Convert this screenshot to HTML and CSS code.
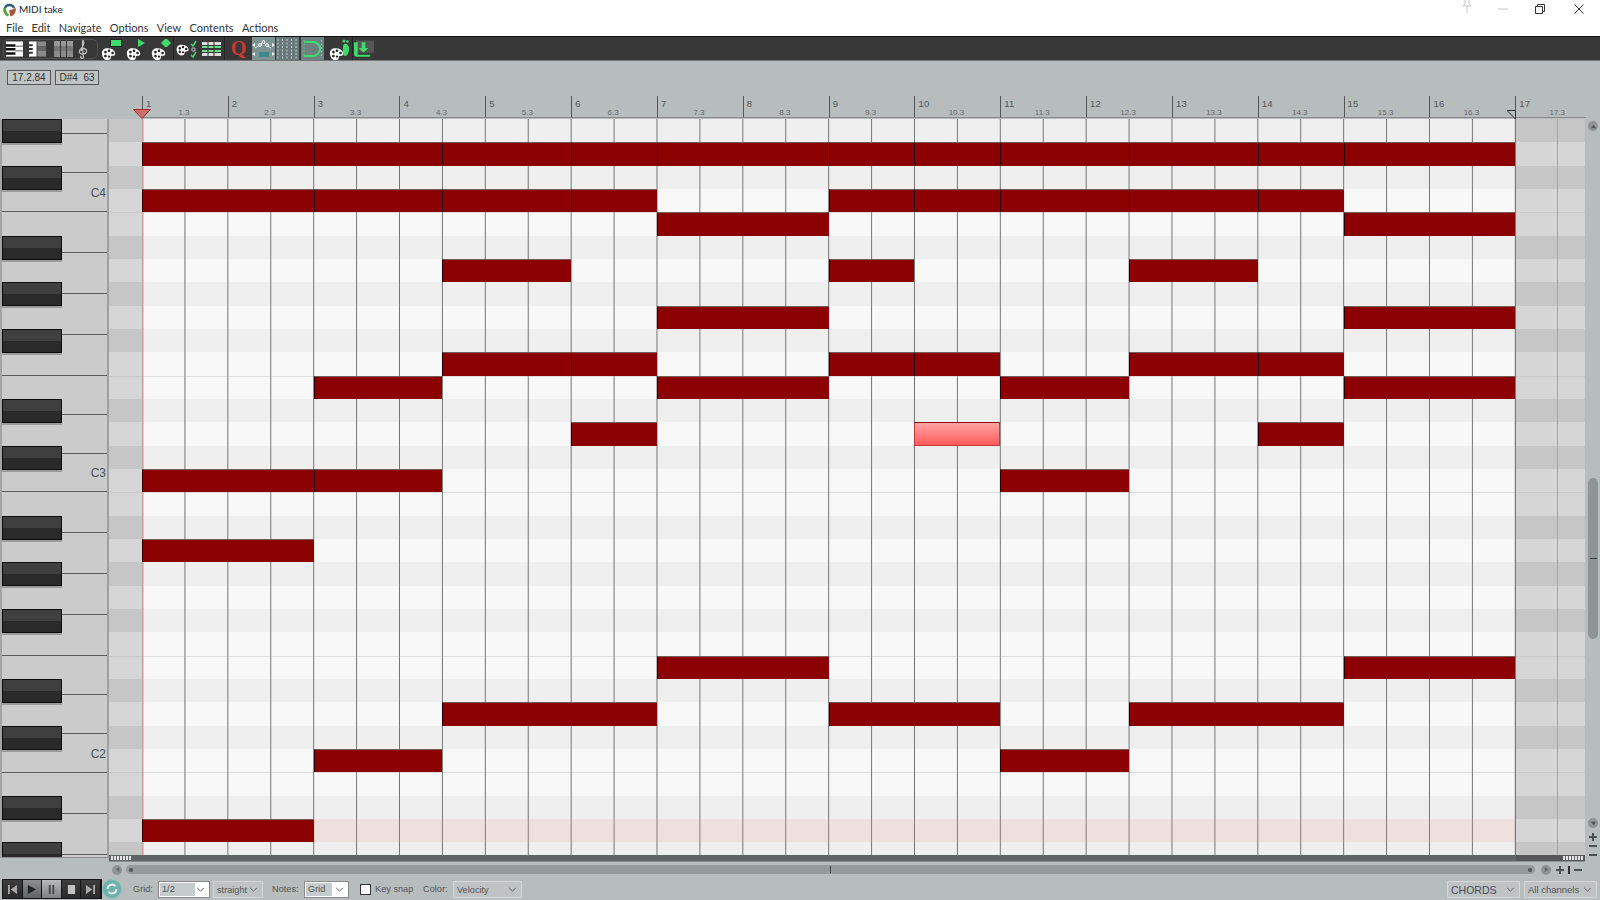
FILE: index.html
```html
<!DOCTYPE html>
<html>
<head>
  <meta charset="UTF-8">
  <title>MIDI take</title>
  <link rel="stylesheet" href="styles.css">
</head>
<body>
  <svg class="defs" width="0" height="0">
    <symbol id="palette" viewBox="0 0 20 18">
      <path d="M2 9c0-4 4-6 8-5 4 0 7 3 7 6 0 2-2 2-3 2-2 0-2 1-2 2 0 2-1 3-4 3-4 0-6-4-6-8z" fill="#fff"/>
      <circle cx="6" cy="8" r="1.5" fill="#222"/><circle cx="10" cy="6.5" r="1.5" fill="#222"/>
      <circle cx="14" cy="9" r="1.5" fill="#222"/><circle cx="6" cy="12.5" r="1.5" fill="#222"/>
      <circle cx="10" cy="13" r="1.3" fill="#222"/>
    </symbol>
    <symbol id="chev" viewBox="0 0 10 6">
      <path d="M1 1l4 4 4-4" fill="none" stroke="#555" stroke-width="1.1"/>
    </symbol>
  </svg>

  <header class="titlebar">
    <svg class="logo" viewBox="0 0 16 16">
      <path d="M2 6a6.5 6.5 0 0 1 12 0l-2 1a4.500 4.500 0 0 0-8 0z" fill="#2d5d78"/>
      <path d="M1.500 6c-1 4 1 8 5 9.500l1-2C5 12 4 9 4.500 7z" fill="#5aa03c"/>
      <path d="M14.500 6c1 4-1 8-5.500 9.500L7.500 9c2-1 4.500-1 7-3z" fill="#a5583c"/>
    </svg>
    <span class="title">MIDI take</span>
    <div class="winbtns">
      <svg class="pin" viewBox="0 0 14 14"><path d="M4 0h6M5 0v5L3 7h8L9 5V0M7 7v7" fill="none" stroke="#c8c8c8"/></svg>
      <svg class="min" viewBox="0 0 10 10"><path d="M0 5h10" stroke="#c4c4c4"/></svg>
      <svg class="max" viewBox="0 0 10 10"><path d="M.5 2.500h7v7h-7zM2.500 2.500v-2h7v7h-2" fill="none" stroke="#333"/></svg>
      <svg class="close" viewBox="0 0 10 10"><path d="M.5.500l9 9M9.500.500l-9 9" stroke="#333"/></svg>
    </div>
  </header>

  <nav class="menubar">
    <span>File</span><span>Edit</span><span>Navigate</span><span>Options</span><span>View</span><span>Contents</span><span>Actions</span>
  </nav>

  <div class="toolbar">
    <div class="tool-group">
      <svg class="ic ic-keys" viewBox="0 0 18 16">
        <rect width="18" height="16" fill="#fff"/>
        <path d="M0 3h10v2.500H0zM0 7h10v2.500H0zM0 11.500h10V14H0z" fill="#111"/>
        <path d="M10 5h8M10 10h8" stroke="#555"/>
      </svg>
      <svg class="ic ic-keys" viewBox="0 0 18 16">
        <rect width="8" height="16" fill="#fff"/>
        <path d="M0 3h4v2H0zM0 7h4v2H0zM0 11h4v2H0z" fill="#333"/>
        <path d="M9 0h9v5H9z" fill="#8a8a8a"/><path d="M9 5h9v5H9z" fill="#666"/><path d="M9 10h9v6H9z" fill="#8a8a8a"/>
      </svg>
      <svg class="ic ic-grid" viewBox="0 0 19 16">
        <path d="M0 0h19v5H0z" fill="#999"/><path d="M0 5h19v5H0z" fill="#777"/><path d="M0 10h19v6H0z" fill="#8a8a8a"/>
        <path d="M6.500 0v16M12.500 0v16" stroke="#383838"/>
      </svg>
      <svg class="ic ic-clef" viewBox="0 0 10 20">
        <path d="M5.500 19c-2 1-3.500-.5-2.500-2M5 1c1.500 3 1 5-1 7.500C2 10.500 1 12 1.500 13.500c1 2.500 6 2.500 7-.5.500-2-1-3.500-3-3.500-1.500 0-2.500 1-2 2.500M5 1c-1 2-1 4 .5 18" fill="none" stroke="#bbb" stroke-width="1.300"/>
      </svg>
    </div>
    <span class="pal">
      <svg class="ic-pal" viewBox="0 0 20 18"><use href="#palette"/></svg>
      <svg class="pal-mark" viewBox="0 0 12 8"><rect x=".5" y=".5" width="11" height="7" fill="#3ddc6a" stroke="#222"/></svg>
    </span>
    <span class="pal">
      <svg class="ic-pal" viewBox="0 0 20 18"><use href="#palette"/></svg>
      <svg class="pal-mark" viewBox="0 0 12 8"><path d="M3 0l7 4-7 4z" fill="#3ddc6a"/></svg>
    </span>
    <span class="pal">
      <svg class="ic-pal" viewBox="0 0 20 18"><use href="#palette"/></svg>
      <svg class="pal-mark" viewBox="0 0 12 8"><path d="M6-1l5 5-5 5-5-5z" fill="#3ddc6a"/></svg>
    </span>
    <span class="btn btn-a">
      <svg class="ic-checks" viewBox="0 0 23 20">
        <use href="#palette" width="16" height="18" y="1"/>
        <path d="M16 5l2 2 3-5M16 16l2 2 3-5" fill="none" stroke="#3ddc6a" stroke-width="1.500"/>
        <path d="M17 9h3v3h-3z" fill="none" stroke="#bbb"/>
      </svg>
    </span>
    <span class="btn btn-b">
      <svg class="ic-table" viewBox="0 0 19 16">
        <path d="M0 1h19v3H0zM0 12h19v3H0z" fill="#ddd"/>
        <path d="M0 5h19v2H0zM0 9h19v2H0z" fill="#6fdc8c"/>
        <path d="M6 0v16M12 0v16" stroke="#333"/>
      </svg>
    </span>
    <span class="btn btn-q">Q</span>
    <span class="btn btn-env">
      <svg class="ic-env" viewBox="0 0 23 20">
        <path d="M3 9l5-3 3-3 3 3 5 3" fill="none" stroke="#dfe5e5"/>
        <circle cx="8" cy="6" r="1.400" fill="#7d9292" stroke="#fff"/><circle cx="11.500" cy="3" r="1.400" fill="#7d9292" stroke="#fff"/><circle cx="15" cy="6" r="1.400" fill="#7d9292" stroke="#fff"/>
        <path d="M7 13h10v5H7z" fill="#3d8a8e"/>
        <path d="M0 6l3-2v4zM23 6l-3-2v4zM0 15l3-2v4zM23 15l-3-2v4z" fill="#eee"/>
      </svg>
    </span>
    <span class="btn btn-dots">
      <svg class="ic-env" viewBox="0 0 23 20">
        <path d="M2 0v20M6.500 0v20M11 0v20M15.500 0v20M20 0v20" stroke="#c3cbcb" stroke-dasharray="2 1.500"/>
      </svg>
    </span>
    <span class="btn btn-loop">
      <svg class="ic-env" viewBox="0 0 23 20">
        <path d="M3 3h9a7 7 0 0 1 0 14H3" fill="none" stroke="#3ddc6a" stroke-width="2"/>
        <path d="M3 1v18" stroke="#3ddc6a" stroke-dasharray="2 1.500"/>
        <path d="M20.500 1v18" stroke="#aab5b5" stroke-dasharray="2 1.500"/>
      </svg>
    </span>
    <span class="pal pal-foot">
      <svg class="ic-pal" viewBox="0 0 20 18"><use href="#palette"/></svg>
      <svg class="foot-mark" viewBox="0 0 9 18"><path d="M3 5c3-1 5 1 5 5s-2 7-4 7-2-3-2-6 0-5 1-6z" fill="#3ddc6a"/><circle cx="3" cy="2" r="1.500" fill="#3ddc6a"/><circle cx="6.500" cy="2.500" r="1.300" fill="#3ddc6a"/></svg>
    </span>
    <span class="btn btn-down">
      <svg class="ic-env" viewBox="0 0 23 20">
        <path d="M3 1h19v13H5" fill="#555"/>
        <path d="M1 3v12c0 2 1 3 3 3h14v-2H5V3z" fill="#3ddc6a"/>
        <path d="M9 3v6H6l5 5 5-5h-3V3z" fill="#3ddc6a"/>
      </svg>
    </span>
  </div>

  <div class="infobar">
    <span class="info info-pos">17.2.84</span>
    <span class="info info-note">D#4&nbsp; 63</span>
  </div>

  <div class="ruler">
    <div class="bar"><b>1</b><i>1.3</i></div>
    <div class="bar"><b>2</b><i>2.3</i></div>
    <div class="bar"><b>3</b><i>3.3</i></div>
    <div class="bar"><b>4</b><i>4.3</i></div>
    <div class="bar"><b>5</b><i>5.3</i></div>
    <div class="bar"><b>6</b><i>6.3</i></div>
    <div class="bar"><b>7</b><i>7.3</i></div>
    <div class="bar"><b>8</b><i>8.3</i></div>
    <div class="bar"><b>9</b><i>9.3</i></div>
    <div class="bar"><b>10</b><i>10.3</i></div>
    <div class="bar"><b>11</b><i>11.3</i></div>
    <div class="bar"><b>12</b><i>12.3</i></div>
    <div class="bar"><b>13</b><i>13.3</i></div>
    <div class="bar"><b>14</b><i>14.3</i></div>
    <div class="bar"><b>15</b><i>15.3</i></div>
    <div class="bar"><b>16</b><i>16.3</i></div>
    <div class="bar"><b>17</b><i>17.3</i></div>
    <svg class="loop-start" viewBox="0 0 18 10"><path d="M.5.500h17L9 9.500z" fill="#c9706e" stroke="#a02828"/></svg>
    <svg class="loop-end" viewBox="0 0 9 9"><path d="M0 .5h8.500V9z" fill="#b7bdbd" stroke="#333"/></svg>
  </div>

  <div class="editor">
    <div class="keyboard">
      <div class="wkey top"></div>
      <div class="wkey low"></div>
      <div class="wkey low">C4</div>
      <div class="wkey"></div><div class="wkey"></div><div class="wkey"></div><div class="wkey"></div>
      <div class="wkey low"></div><div class="wkey low"></div><div class="wkey low">C3</div>
      <div class="wkey"></div><div class="wkey"></div><div class="wkey"></div><div class="wkey"></div>
      <div class="wkey low"></div><div class="wkey low"></div><div class="wkey low">C2</div>
      <div class="wkey"></div><div class="wkey"></div>
      <div class="blacks">
        <div class="bkey" style="grid-row:1"></div>
        <div class="bkey" style="grid-row:3"></div>
        <div class="bkey" style="grid-row:6"></div>
        <div class="bkey" style="grid-row:8"></div>
        <div class="bkey" style="grid-row:10"></div>
        <div class="bkey" style="grid-row:13"></div>
        <div class="bkey" style="grid-row:15"></div>
        <div class="bkey" style="grid-row:18"></div>
        <div class="bkey" style="grid-row:20"></div>
        <div class="bkey" style="grid-row:22"></div>
        <div class="bkey" style="grid-row:25"></div>
        <div class="bkey" style="grid-row:27"></div>
        <div class="bkey" style="grid-row:30"></div>
        <div class="bkey" style="grid-row:32"></div>
      </div>
    </div>

    <div class="center">
      <div class="roll">
        <div class="gutter rows"></div>
        <div class="notes rows">
          <div class="note" style="grid-area:2/1/3/5"></div>
          <div class="note" style="grid-area:2/5/3/8"></div>
          <div class="note" style="grid-area:2/8/3/11"></div>
          <div class="note" style="grid-area:2/11/3/13"></div>
          <div class="note" style="grid-area:2/13/3/17"></div>
          <div class="note" style="grid-area:2/17/3/19"></div>
          <div class="note" style="grid-area:2/19/3/21"></div>
          <div class="note" style="grid-area:2/21/3/24"></div>
          <div class="note" style="grid-area:2/24/3/27"></div>
          <div class="note" style="grid-area:2/27/3/29"></div>
          <div class="note" style="grid-area:2/29/3/33"></div>

          <div class="note" style="grid-area:4/1/5/5"></div>
          <div class="note" style="grid-area:4/5/5/8"></div>
          <div class="note" style="grid-area:4/8/5/11"></div>
          <div class="note" style="grid-area:4/11/5/13"></div>
          <div class="note" style="grid-area:4/17/5/19"></div>
          <div class="note" style="grid-area:4/19/5/21"></div>
          <div class="note" style="grid-area:4/21/5/24"></div>
          <div class="note" style="grid-area:4/24/5/27"></div>
          <div class="note" style="grid-area:4/27/5/29"></div>

          <div class="note" style="grid-area:5/13/6/17"></div>
          <div class="note" style="grid-area:5/29/6/33"></div>

          <div class="note" style="grid-area:7/8/8/11"></div>
          <div class="note" style="grid-area:7/17/8/19"></div>
          <div class="note" style="grid-area:7/24/8/27"></div>

          <div class="note" style="grid-area:9/13/10/17"></div>
          <div class="note" style="grid-area:9/29/10/33"></div>

          <div class="note" style="grid-area:11/8/12/11"></div>
          <div class="note" style="grid-area:11/11/12/13"></div>
          <div class="note" style="grid-area:11/17/12/19"></div>
          <div class="note" style="grid-area:11/19/12/21"></div>
          <div class="note" style="grid-area:11/24/12/27"></div>
          <div class="note" style="grid-area:11/27/12/29"></div>

          <div class="note" style="grid-area:12/5/13/8"></div>
          <div class="note" style="grid-area:12/13/13/17"></div>
          <div class="note" style="grid-area:12/21/13/24"></div>
          <div class="note" style="grid-area:12/29/13/33"></div>

          <div class="note" style="grid-area:14/11/15/13"></div>
          <div class="note selected" style="grid-area:14/19/15/21"></div>
          <div class="note" style="grid-area:14/27/15/29"></div>

          <div class="note" style="grid-area:16/1/17/5"></div>
          <div class="note" style="grid-area:16/5/17/8"></div>
          <div class="note" style="grid-area:16/21/17/24"></div>

          <div class="note" style="grid-area:19/1/20/5"></div>

          <div class="note" style="grid-area:24/13/25/17"></div>
          <div class="note" style="grid-area:24/29/25/33"></div>

          <div class="note" style="grid-area:26/8/27/13"></div>
          <div class="note" style="grid-area:26/17/27/21"></div>
          <div class="note" style="grid-area:26/24/27/29"></div>

          <div class="note" style="grid-area:28/5/29/8"></div>
          <div class="note" style="grid-area:28/21/29/24"></div>

          <div class="note" style="grid-area:31/1/32/5"></div>
          <div class="row-hint" style="grid-area:31/5/32/33"></div>
        </div>
        <div class="tail rows"></div>
      </div>
      <div class="strip">
        <span class="grip"></span>
        <span class="grip"></span>
      </div>
    </div>

    <div class="vrail">
      <span class="round up"><svg viewBox="0 0 8 8"><path d="M4 2l3 4H1z" fill="#555"/></svg></span>
      <span class="vthumb"><em></em></span>
      <span class="round down"><svg viewBox="0 0 8 8"><path d="M4 6L1 2h6z" fill="#555"/></svg></span>
      <span class="zoom zoom-plus"></span>
      <span class="zoom zoom-minus"></span>
      <span class="zoom zoom-minus"></span>
    </div>
  </div>

  <div class="hscroll">
    <span class="round"><svg viewBox="0 0 8 8"><path d="M2 4l4-3v6z" fill="#666"/></svg></span>
    <span class="htrack"><em></em><u></u><em></em></span>
    <span class="round"><svg viewBox="0 0 8 8"><path d="M6 4L2 1v6z" fill="#666"/></svg></span>
    <span class="zoom zoom-plus"></span>
    <span class="bar-sep"></span>
    <span class="zoom zoom-minus"></span>
  </div>

  <footer class="statusbar">
    <div class="transport">
      <span class="tbtn"><svg viewBox="0 0 12 10"><path d="M1 0h2v10H1zM11 0v10L4 5z" fill="#aaa"/></svg></span>
      <span class="tbtn lit"><svg viewBox="0 0 12 10"><path d="M2 0l9 5-9 5z" fill="#222"/></svg></span>
      <span class="tbtn lit2"><svg viewBox="0 0 12 10"><path d="M3 0h2v10H3zM7 0h2v10H7z" fill="#444"/></svg></span>
      <span class="tbtn"><svg viewBox="0 0 12 10"><path d="M2 0h8v10H2z" fill="#c2c2c2"/></svg></span>
      <span class="tbtn"><svg viewBox="0 0 12 10"><path d="M9 0h2v10H9zM1 0v10l7-5z" fill="#aaa"/></svg></span>
    </div>
    <span class="repeat"><svg viewBox="0 0 14 14"><path d="M2.500 7a4.500 4.500 0 0 1 8-2.800M11.500 7a4.500 4.500 0 0 1-8 2.800" fill="none" stroke="#e8f4f3" stroke-width="1.800"/></svg></span>
    <label class="lbl lbl-grid">Grid:</label>
    <span class="sel sel-white sel-div"><b>1/2</b><svg viewBox="0 0 10 6"><use href="#chev"/></svg></span>
    <span class="sel sel-swing">straight<svg viewBox="0 0 10 6"><use href="#chev"/></svg></span>
    <label class="lbl lbl-notes">Notes:</label>
    <span class="sel sel-white sel-notes"><b>Grid</b><svg viewBox="0 0 10 6"><use href="#chev"/></svg></span>
    <span class="check"></span>
    <label class="lbl lbl-snap">Key snap</label>
    <label class="lbl lbl-color">Color:</label>
    <span class="sel sel-color">Velocity<svg viewBox="0 0 10 6"><use href="#chev"/></svg></span>
    <span class="sel sel-chords">CHORDS<svg viewBox="0 0 10 6"><use href="#chev"/></svg></span>
    <span class="sel sel-chan">All channels<svg viewBox="0 0 10 6"><use href="#chev"/></svg></span>
  </footer>
</body>
</html>
```

FILE: styles.css
```css
* {
    box-sizing: border-box;
}

html, body {
    margin: 0;
    height: 900px;
    overflow: hidden;
}

body {
    display: flex;
    flex-direction: column;
    width: 1600px;
    background: #b7bdbd;
    color: #444;
    font-family: "Liberation Sans", Arial, sans-serif;
}

.defs {
    position: absolute;
}

/* title + menu */
.titlebar {
    display: flex;
    align-items: center;
    height: 18px;
    padding-left: 2px;
    background: #fff;
}

.logo {
    width: 15px;
    height: 15px;
}

.title {
    margin-left: 2px;
    font: 10px Lato, sans-serif;
    color: #222;
}

.winbtns {
    display: flex;
    align-items: center;
    margin-left: auto;
    height: 18px;
}

.winbtns svg {
    width: 10px;
    height: 10px;
}

.winbtns .pin {
    width: 14px;
    height: 14px;
    margin-right: 24px;
    margin-top: -6px;
}

.winbtns .min {
    margin-right: 27px;
}

.winbtns .max {
    margin-right: 29px;
}

.winbtns .close {
    margin-right: 16px;
}

.menubar {
    display: flex;
    gap: 8.3px;
    align-items: center;
    height: 18px;
    padding-left: 6px;
    background: #fff;
    font: 11px Lato, sans-serif;
    color: #333;
}

/* toolbar */
.toolbar {
    display: flex;
    align-items: center;
    height: 25px;
    padding-left: 3px;
    background: #383838;
    border-top: 1px solid #111;
    border-bottom: 1px solid #777;
}

.tool-group {
    display: flex;
    align-items: center;
    width: 95px;
    height: 20px;
    padding-left: 2px;
    border: 1px solid #4e4e4e;
    border-radius: 5px;
}

.ic {
    display: block;
    flex: none;
}

.ic-keys {
    width: 17px;
    height: 16px;
    margin-right: 6px;
}

.ic-grid {
    width: 19px;
    height: 16px;
    margin-left: 2px;
}

.ic-clef {
    width: 10px;
    height: 20px;
    margin-left: 5px;
}

.pal {
    position: relative;
    flex: none;
    width: 25px;
    height: 22px;
}

.ic-pal {
    position: absolute;
    left: 2px;
    bottom: -1px;
    width: 18px;
    height: 16px;
}

.pal-mark {
    position: absolute;
    right: 1px;
    top: 1px;
    width: 12px;
    height: 8px;
}

.foot-mark {
    position: absolute;
    right: 1px;
    top: 1px;
    width: 9px;
    height: 18px;
}

.pal-foot {
    margin-left: 2px;
}

.btn {
    display: flex;
    flex: none;
    align-items: center;
    justify-content: center;
    width: 23px;
    height: 23px;
}

.btn-a {
    width: 26px;
    border-left: 1px solid #262626;
}

.ic-checks {
    width: 23px;
    height: 20px;
}

.ic-table {
    width: 19px;
    height: 16px;
}

.btn-b {
    border-right: 1px solid #262626;
    width: 26px;
}

.btn-q {
    width: 27px;
    font: bold 20px "Liberation Serif", serif;
    color: #c83a32;
}

.ic-env {
    width: 23px;
    height: 20px;
}

.btn-env {
    background: #7d9292;
    margin-right: 1px;
}

.btn-dots {
    background: #68797a;
    margin-right: 2px;
}

.btn-loop {
    background: #6e8080;
}

.btn-down {
    margin-left: 1px;
    border-left: 1px solid #262626;
}

/* position readouts */
.infobar {
    display: flex;
    align-items: flex-start;
    gap: 4px;
    height: 35px;
    padding: 9px 0 0 7px;
}

.info {
    height: 15px;
    padding-top: 1px;
    border: 1px solid #555;
    background: #bfc4c4;
    font-size: 10px;
    line-height: 11px;
    text-align: center;
    color: #333;
}

.info-pos {
    width: 44px;
}

.info-note {
    width: 44px;
}

/* ruler */
.ruler {
    position: relative;
    display: flex;
    flex: none;
    height: 23px;
    padding-left: 142px;
}

.bar {
    flex: none;
    width: 85.83px;
    height: 22px;
    padding: 2px 0 0 3px;
    border-left: 1px solid #555;
    border-bottom: 1px solid #8a8d8d;
}

.bar:last-of-type {
    width: 71px;
}

.bar b {
    display: block;
    font-weight: normal;
    font-size: 9.5px;
    letter-spacing: 0.2px;
    line-height: 11px;
    color: #555;
}

.bar i {
    display: block;
    width: 82px;
    margin-left: -3px;
    font-style: normal;
    font-size: 8px;
    line-height: 8px;
    text-align: center;
    color: #666;
}

.loop-start {
    position: absolute;
    left: 133px;
    top: 13px;
    width: 18px;
    height: 10px;
}

.loop-end {
    position: absolute;
    left: 1507px;
    top: 14px;
    width: 9px;
    height: 9px;
}

/* keyboard + piano roll */
.editor {
    display: flex;
    flex: none;
    height: 743px;
}

.keyboard {
    position: relative;
    flex: none;
    width: 109px;
    height: 739px;
    overflow: hidden;
    background: #cbcbcb;
    border-left: 2px solid #a4a4a4;
    border-right: 2px solid #a0a0a0;
    border-bottom: 1px solid #8c8c8c;
}

.wkey {
    display: flex;
    align-items: center;
    justify-content: flex-end;
    height: 41px;
    padding: 2px 1px 0 0;
    border-bottom: 1px solid #5d5d5d;
    font-size: 12px;
    color: #4a5260;
}

.wkey.top {
    height: 15px;
}

.wkey.low {
    height: 38.89px;
}

.blacks {
    position: absolute;
    inset: 0;
    display: grid;
    grid-template-rows: repeat(32, 23.333px);
    grid-template-columns: 60px;
}

.bkey {
    grid-column: 1;
    height: 24px;
    border: 1px solid #0c0c0c;
    background: linear-gradient(#3f3f3f 0 50%, #2a2a2a 50%);
    box-shadow: 0 2px 0 #9b9b9b;
}

.center {
    display: flex;
    flex: none;
    flex-direction: column;
    width: 1476px;
}

.roll {
    display: flex;
    height: 736px;
    overflow: hidden;
}

.rows {
    background-image: linear-gradient(
        var(--dk) 0 23.33px, var(--lt) 0 46.67px, var(--dk) 0 70px, var(--lt) 0 93.33px,
        var(--sep) 0 94.33px, var(--lt) 0 116.67px, var(--dk) 0 140px, var(--lt) 0 163.33px,
        var(--dk) 0 186.67px, var(--lt) 0 210px, var(--dk) 0 233.33px, var(--lt) 0 256.67px,
        var(--sep) 0 257.67px, var(--lt) 0 280px);
    background-size: 100% 280px;
}

.gutter {
    --dk: #c6c6c6;
    --lt: #d6d6d6;
    --sep: #cacaca;
    flex: none;
    width: 33px;
}

.notes {
    --dk: #efefef;
    --lt: #f8f8f8;
    --sep: #dedede;
    display: grid;
    flex: none;
    width: 1373.3px;
    height: 746.6px;
    grid-template-columns: repeat(32, 1fr);
    grid-template-rows: repeat(32, 23.333px);
    background-image:
        linear-gradient(#cf9c9c, #cf9c9c),
        repeating-linear-gradient(90deg, #767676 0, rgba(118, 118, 118, 0) 1px, rgba(118, 118, 118, 0) 41.916px, #767676 42.916px),
        linear-gradient(
            var(--dk) 0 23.33px, var(--lt) 0 46.67px, var(--dk) 0 70px, var(--lt) 0 93.33px,
            var(--sep) 0 94.33px, var(--lt) 0 116.67px, var(--dk) 0 140px, var(--lt) 0 163.33px,
            var(--dk) 0 186.67px, var(--lt) 0 210px, var(--dk) 0 233.33px, var(--lt) 0 256.67px,
            var(--sep) 0 257.67px, var(--lt) 0 280px);
    background-size: 1.5px 100%, 100% 100%, 100% 280px;
    background-repeat: no-repeat, no-repeat, repeat-y;
}

.note {
    background: #8b0000;
    border-left: 1px solid #2a0000;
    border-top: 1px solid #77595a;
}

.note.selected {
    background: linear-gradient(#ffa2a2, #ff5c5c);
    border: 1px solid #c13a3a;
    border-top-color: #8b0000;
}

.row-hint {
    background: rgba(205, 130, 130, 0.2);
}

.tail {
    --dk: #c6c6c6;
    --lt: #d6d6d6;
    --sep: #cacaca;
    position: relative;
    flex: none;
    width: 70px;
    background-image:
        linear-gradient(90deg, #777 0 1.3px, transparent 1.3px 42px, #a4a4a4 42px 43.3px, transparent 43.3px),
        linear-gradient(
            var(--dk) 0 23.33px, var(--lt) 0 46.67px, var(--dk) 0 70px, var(--lt) 0 93.33px,
            var(--sep) 0 94.33px, var(--lt) 0 116.67px, var(--dk) 0 140px, var(--lt) 0 163.33px,
            var(--dk) 0 186.67px, var(--lt) 0 210px, var(--dk) 0 233.33px, var(--lt) 0 256.67px,
            var(--sep) 0 257.67px, var(--lt) 0 280px);
    background-size: 100% 100%, 100% 280px;
    background-repeat: no-repeat, repeat-y;
}

.strip {
    display: flex;
    justify-content: space-between;
    align-items: center;
    height: 7px;
    padding: 0 2px;
    background: linear-gradient(90deg, #5f6464 95.3%, #535757 95.3%);
    border-bottom: 1px solid #8b9090;
}

.grip {
    width: 20px;
    height: 4px;
    background: repeating-linear-gradient(90deg, #e6e6e6 0 2px, #5f6464 2px 3px);
}

.vrail {
    display: flex;
    flex: none;
    flex-direction: column;
    align-items: center;
    width: 15px;
    padding-left: 1px;
}

.round {
    display: flex;
    flex: none;
    align-items: center;
    justify-content: center;
    width: 10px;
    height: 10px;
    border-radius: 50%;
    background: #8f9494;
}

.round svg {
    width: 7px;
    height: 7px;
}

.vrail .up {
    margin-top: 2px;
}

.vthumb {
    display: flex;
    flex: none;
    align-items: center;
    justify-content: center;
    width: 10px;
    height: 161px;
    margin-top: 347px;
    border-radius: 5px;
    background: #8f9494;
}

.vthumb em {
    width: 7px;
    height: 1.5px;
    background: #3c3c3c;
}

.vrail .down {
    margin-top: 179px;
}

.zoom {
    position: relative;
    flex: none;
    width: 8px;
    height: 8px;
}

.zoom::before, .zoom-plus::after {
    content: "";
    position: absolute;
    left: 0;
    top: 3px;
    width: 8px;
    height: 2px;
    background: #4c5050;
}

.zoom-plus::after {
    left: 3px;
    top: 0;
    width: 2px;
    height: 8px;
}

.vrail .zoom-plus {
    margin-top: 5px;
}

.vrail .zoom-minus {
    margin-top: 1px;
}

/* bottom scrollbar */
.hscroll {
    display: flex;
    flex: none;
    align-items: center;
    height: 15px;
    padding-left: 112px;
}

.htrack {
    display: flex;
    align-items: center;
    justify-content: space-between;
    width: 1409px;
    height: 9px;
    margin: 0 6px 0 4px;
    padding: 0 3px;
    border-radius: 5px;
    background: #959a9a;
}

.htrack em {
    width: 4px;
    height: 4px;
    border-radius: 50%;
    background: #555;
}

.htrack u {
    width: 1.5px;
    height: 7px;
    background: #444;
}

.hscroll .zoom-plus {
    margin-left: 5px;
}

.bar-sep {
    width: 1.5px;
    height: 8px;
    margin: 0 4px;
    background: #333;
}

/* footer controls */
.statusbar {
    display: flex;
    flex: none;
    align-items: flex-start;
    height: 23px;
    padding: 2px 3px 0 2px;
    font-size: 9.2px;
}

.transport {
    display: flex;
    flex: none;
    width: 100px;
    height: 20px;
    border: 1px solid #141414;
    background: #2f2f2f;
}

.tbtn {
    display: flex;
    flex: 1;
    align-items: center;
    justify-content: center;
    border-right: 1px solid #141414;
    background: linear-gradient(#3d3d3d, #2b2b2b);
}

.tbtn svg {
    width: 11px;
    height: 9px;
}

.tbtn.lit {
    background: linear-gradient(#8c9090, #5f6363);
}

.tbtn.lit2 {
    background: linear-gradient(#b6baba, #7e8282);
}

.repeat {
    display: flex;
    flex: none;
    align-items: center;
    justify-content: center;
    width: 20px;
    height: 20px;
    border-radius: 50%;
    background: #6fb0ac;
    border: 1px solid #8ac4c0;
}

.repeat svg {
    width: 14px;
    height: 14px;
}

.lbl {
    flex: none;
    height: 20px;
    line-height: 21px;
    color: #555;
}

.lbl-grid {
    width: 25px;
    margin-left: 11px;
}

.lbl-notes {
    width: 32px;
    margin-left: 9px;
}

.lbl-snap {
    width: 48px;
    margin-left: 4px;
}

.lbl-color {
    width: 30px;
}

.sel {
    position: relative;
    display: flex;
    flex: none;
    align-items: center;
    height: 17px;
    margin-top: 2px;
    padding-left: 3px;
    border: 1px solid #d5d8d8;
    background: #bfc3c3;
    color: #555;
}

.sel svg {
    position: absolute;
    right: 4px;
    top: 5px;
    width: 9px;
    height: 5px;
}

.sel-white {
    background: #fff;
    border-color: #888;
    padding-left: 1px;
}

.sel-white b {
    font-weight: normal;
    height: 13px;
    line-height: 13px;
    padding-left: 2px;
    background: #c6cbcb;
}

.sel-div {
    width: 52px;
}

.sel-div b {
    width: 35px;
}

.sel-swing {
    width: 50px;
    margin-left: 3px;
}

.sel-notes {
    width: 45px;
}

.sel-notes b {
    width: 26px;
}

.check {
    flex: none;
    width: 11px;
    height: 11px;
    margin: 5px 0 0 11px;
    background: #fff;
    border: 1px solid #333;
}

.sel-color {
    width: 69px;
}

.sel-chords {
    width: 73px;
    margin-left: auto;
    font-size: 10.5px;
    color: #4a4a5a;
}

.sel-chan {
    width: 73px;
    margin-left: 4px;
    font-size: 9.5px;
}
```
